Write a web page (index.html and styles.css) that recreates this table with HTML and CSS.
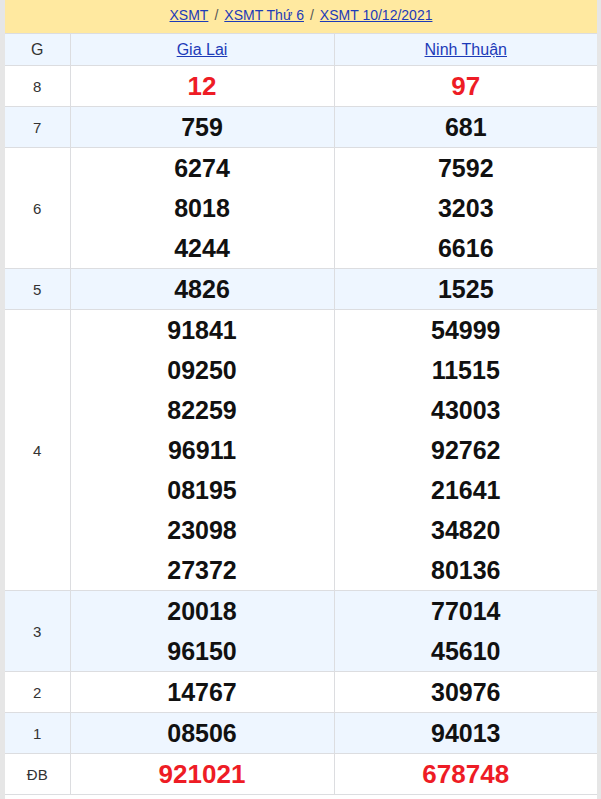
FILE: index.html
```html
<!DOCTYPE html>
<html>
<head>
<meta charset="utf-8">
<link rel="stylesheet" href="styles.css">
</head>
<body>
<div class="frame">
  <div class="crumbs">
    <a href="#">XSMT</a><span class="sep">/</span><a href="#">XSMT Thứ 6</a><span class="sep">/</span><a href="#">XSMT 10/12/2021</a>
  </div>
  <table class="kq">
    <colgroup><col class="c1"><col class="c2"><col class="c3"></colgroup>
    <tr class="head alt">
      <td class="g">G</td>
      <td><a href="#">Gia Lai</a></td>
      <td><a href="#">Ninh Thuận</a></td>
    </tr>
    <tr>
      <td class="g">8</td>
      <td><div class="n red">12</div></td>
      <td><div class="n red">97</div></td>
    </tr>
    <tr class="alt">
      <td class="g">7</td>
      <td><div class="n">759</div></td>
      <td><div class="n">681</div></td>
    </tr>
    <tr>
      <td class="g">6</td>
      <td><div class="n">6274</div><div class="n">8018</div><div class="n">4244</div></td>
      <td><div class="n">7592</div><div class="n">3203</div><div class="n">6616</div></td>
    </tr>
    <tr class="alt">
      <td class="g">5</td>
      <td><div class="n">4826</div></td>
      <td><div class="n">1525</div></td>
    </tr>
    <tr>
      <td class="g">4</td>
      <td><div class="n">91841</div><div class="n">09250</div><div class="n">82259</div><div class="n">96911</div><div class="n">08195</div><div class="n">23098</div><div class="n">27372</div></td>
      <td><div class="n">54999</div><div class="n">11515</div><div class="n">43003</div><div class="n">92762</div><div class="n">21641</div><div class="n">34820</div><div class="n">80136</div></td>
    </tr>
    <tr class="alt">
      <td class="g">3</td>
      <td><div class="n">20018</div><div class="n">96150</div></td>
      <td><div class="n">77014</div><div class="n">45610</div></td>
    </tr>
    <tr>
      <td class="g">2</td>
      <td><div class="n">14767</div></td>
      <td><div class="n">30976</div></td>
    </tr>
    <tr class="alt">
      <td class="g">1</td>
      <td><div class="n">08506</div></td>
      <td><div class="n">94013</div></td>
    </tr>
    <tr>
      <td class="g">ĐB</td>
      <td><div class="n red">921021</div></td>
      <td><div class="n red">678748</div></td>
    </tr>
  </table>
</div>
</body>
</html>
```

FILE: styles.css
```css
html, body {
  margin: 0;
  padding: 0;
  background: #e6e6e6;
}
body {
  font-family: "Liberation Sans", Arial, sans-serif;
  color: #222;
}
.frame {
  margin: 0 4px 0 5px;
  background: #fff;
  min-height: 799px;
}
.crumbs {
  height: 33px;
  background: #ffe9a0;
  display: flex;
  justify-content: center;
  align-items: center;
  font-size: 14px;
  box-sizing: border-box;
  padding-bottom: 3px;
}
.crumbs a {
  color: #1d3bb8;
  text-decoration: underline;
}
.crumbs .sep {
  color: #555;
  margin: 0 6px;
}
.kq {
  width: 100%;
  border-collapse: collapse;
  table-layout: fixed;
}
.c1 { width: 65px; }
.c2 { width: 264px; }
.kq td {
  border: 1px solid #dcdde0;
  padding: 0;
  text-align: center;
  vertical-align: middle;
}
.kq tr td:first-child { border-left: none; }
.kq tr td:last-child { border-right: none; }
.kq tr:first-child td { border-top: 1px solid #dcdde0; }
.alt td { background: #eef6ff; }
.head td {
  height: 31px;
  font-size: 16px;
}
.head a {
  color: #1d3bb8;
  text-decoration: underline;
}
.g {
  font-size: 15px;
  color: #333;
}
.head .g { font-size: 16px; }
.n {
  font-size: 25px;
  font-weight: bold;
  line-height: 40px;
  color: #111;
}
.n.red {
  color: #ee1c25;
  font-size: 26px;
}
```
